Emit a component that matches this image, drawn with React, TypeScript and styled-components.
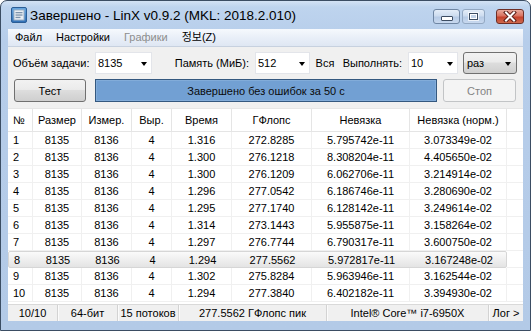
import React from "react";
import styled, { createGlobalStyle, css } from "styled-components";

const GlobalStyle = createGlobalStyle`
	html, body {
		margin: 0;
		padding: 0;
		background: #ffffff;
	}
	body {
		font-family: "Liberation Sans", "Noto Sans CJK KR", sans-serif;
		font-size: 11px;
		color: #000;
	}
`;

const COLS = "25px 49px 50px 40px 60px 80px 98px 97px";

const Window = styled.div`
	width: 531px;
	height: 331px;
	box-sizing: border-box;
	display: flex;
	flex-direction: column;
	border: 1px solid #3b4d63;
	border-radius: 7px 7px 0 0;
	background: linear-gradient(180deg, #d3e2f4 0px, #bed4ee 6px, #b6cdea 40px, #b3cae7 100%);
	padding: 0 7px 9px 7px;
	overflow: hidden;
`;

const TitleBar = styled.div`
	height: 28px;
	display: flex;
	align-items: center;
	padding-left: 3px;

	.title {
		margin-left: 3px;
		font-size: 13.5px;
		color: #000;
		white-space: nowrap;
	}
`;

const CaptionGroup = styled.div`
	margin-left: auto;
	display: flex;
	align-items: center;
	gap: 2px;
	margin-right: -1px;
	margin-top: 3px;
`;

const CaptionButton = styled.div<{ $kind: "min" | "max" | "close" }>`
	height: 15px;
	width: ${(p) => (p.$kind === "close" ? "28px" : p.$kind === "min" ? "27px" : "23px")};
	box-sizing: border-box;
	border: 1px solid ${(p) => (p.$kind === "close" ? "#6e2e26" : "#6f86a3")};
	border-radius: 3px;
	display: flex;
	align-items: center;
	justify-content: center;
	background: ${(p) =>
		p.$kind === "close"
			? "linear-gradient(180deg, #e9a99b 0%, #d9725f 45%, #c5412b 55%, #cf6a4e 100%)"
			: "linear-gradient(180deg, #e4edf8 0%, #cddcef 45%, #b7cbe6 55%, #c8d9ef 100%)"};
	${(p) =>
		p.$kind === "close" &&
		css`
			margin-left: 9px;
		`}
	${(p) =>
		p.$kind === "max" &&
		css`
			border-color: #93a8c2;
		`}
`;

const MinGlyph = styled.div`
	width: 10px;
	height: 3px;
	margin-top: 4px;
	background: #fff;
	border: 1px solid #3d4d63;
	border-radius: 1px;
`;

const MaxGlyph = styled.div`
	width: 7px;
	height: 5px;
	border: 1px solid #3d4d63;
	box-shadow: inset 0 0 0 1px #fff, 0 0 0 1px rgba(255, 255, 255, 0.7);
	background: #c3d3e8;
`;

const Client = styled.div`
	flex: 1;
	display: flex;
	flex-direction: column;
	background: #f0f0f0;
	min-height: 0;
`;

const MenuBar = styled.div`
	height: 17px;
	display: flex;
	align-items: center;
	background: linear-gradient(180deg, #f6f9fd 0%, #e9eff8 50%, #dfe7f3 100%);
	border-bottom: 1px solid #c7d1df;
`;

const MenuItem = styled.span<{ $disabled?: boolean }>`
	padding: 0 7px;
	color: ${(p) => (p.$disabled ? "#8d8d8d" : "#000")};
	font-size: 11px;
	line-height: 17px;
`;

const ToolRow = styled.div<{ $h: number }>`
	display: flex;
	align-items: center;
	height: ${(p) => p.$h}px;
	margin-top: 5px;
`;

const Label = styled.div<{ $w: number; $align?: "left" | "right" | "center" }>`
	width: ${(p) => p.$w}px;
	box-sizing: border-box;
	text-align: ${(p) => p.$align || "right"};
	padding: ${(p) => (p.$align === "left" ? "0 0 0 5px" : p.$align === "center" ? "0" : "0 6px 0 0")};
	white-space: nowrap;
`;

const Combo = styled.div<{ $w: number }>`
	width: ${(p) => p.$w}px;
	height: 22px;
	box-sizing: border-box;
	background: #fff;
	border: 1px solid #e3e5ea;
	display: flex;
	align-items: center;
	padding: 0 4px 0 2px;

	span {
		flex: 1;
	}
`;

const Arrow = styled.div`
	width: 0;
	height: 0;
	border-left: 3.5px solid transparent;
	border-right: 3.5px solid transparent;
	border-top: 4px solid #000;
	margin-top: 1px;
`;

const ComboButton = styled(Combo)`
	margin-left: 5px;
	border: 1px solid #707070;
	border-radius: 3px;
	background: linear-gradient(180deg, #f2f2f2 0%, #ebebeb 45%, #dddddd 50%, #cfcfcf 100%);
	padding: 0 5px 0 3px;
`;

const Button = styled.div<{ $w: number; $disabled?: boolean; $ml: number }>`
	width: ${(p) => p.$w}px;
	height: 23px;
	margin-left: ${(p) => p.$ml}px;
	box-sizing: border-box;
	display: flex;
	align-items: center;
	justify-content: center;
	border-radius: 3px;
	${(p) =>
		p.$disabled
			? css`
					border: 1px solid #c2c4c6;
					background: #f4f4f4;
					color: #838383;
				`
			: css`
					border: 1px solid #707070;
					background: linear-gradient(180deg, #f2f2f2 0%, #ebebeb 45%, #dddddd 50%, #cfcfcf 100%);
					color: #000;
				`}
`;

const Progress = styled.div<{ $ml: number }>`
	width: 342px;
	height: 23px;
	margin-left: ${(p) => p.$ml}px;
	box-sizing: border-box;
	border: 1px solid #34587f;
	background: #72a0d3;
	box-shadow: inset 0 0 0 1px #82acd9;
	display: flex;
	align-items: center;
	justify-content: center;
	color: #0b0b0b;
`;

const Table = styled.div`
	flex: 1;
	margin-top: 6px;
	background: #fff;
	display: flex;
	flex-direction: column;
	overflow: hidden;
`;

const Row = styled.div<{ $header?: boolean }>`
	display: flex;
	height: ${(p) => (p.$header ? "24px" : "17px")};
	flex-shrink: 0;
	box-sizing: border-box;
	${(p) =>
		p.$header &&
		css`
			border-top: 1px solid #e6e6e6;
			border-bottom: 1px solid #e5e5e5;
		`}
`;

const Cells = styled.div<{ $selected?: boolean }>`
	display: grid;
	grid-template-columns: ${COLS};
	box-sizing: border-box;
	width: 499px;
	${(p) =>
		p.$selected &&
		css`
			border: 1px solid #d6d6d6;
			border-radius: 2px;
			background: linear-gradient(180deg, #fafafa 0%, #efefef 50%, #e4e4e4 100%);
		`}
`;

const Cell = styled.div<{ $left?: boolean; $header?: boolean; $plain?: boolean }>`
	display: flex;
	align-items: center;
	justify-content: ${(p) => (p.$left ? "flex-start" : "center")};
	padding-left: ${(p) => (p.$left ? "5px" : "0")};
	white-space: nowrap;
	overflow: hidden;
	box-sizing: border-box;
	border-right: 1px solid ${(p) => (p.$header ? "#e5e5e5" : "#f0f0f0")};
	${(p) =>
		!p.$header &&
		!p.$plain &&
		css`
			border-bottom: 1px solid #f0f0f0;
		`}
	${(p) =>
		p.$plain &&
		css`
			border-right-color: transparent;
		`}
`;

const Filler = styled(Cell)`
	width: 16px;
	border-right: none;
`;

const StatusBar = styled.div`
	height: 17px;
	display: flex;
	border-top: 1px solid #d9d9d9;
	box-sizing: border-box;
	background: #f0f0f0;
`;

const Panel = styled.div<{ $w: number; $first?: boolean }>`
	width: ${(p) => p.$w}px;
	box-sizing: border-box;
	display: flex;
	align-items: center;
	justify-content: center;
	white-space: nowrap;
	overflow: hidden;
	${(p) =>
		!p.$first &&
		css`
			border-left: 1px solid #d3d3d3;
			box-shadow: inset 1px 0 0 #fbfbfb;
		`}
`;

const headers = ["№", "Размер", "Измер.", "Выр.", "Время", "ГФлопс", "Невязка", "Невязка (норм.)"];

const rows: string[][] = [
	["1", "8135", "8136", "4", "1.316", "272.8285", "5.795742e-11", "3.073349e-02"],
	["2", "8135", "8136", "4", "1.300", "276.1218", "8.308204e-11", "4.405650e-02"],
	["3", "8135", "8136", "4", "1.300", "276.1209", "6.062706e-11", "3.214914e-02"],
	["4", "8135", "8136", "4", "1.296", "277.0542", "6.186746e-11", "3.280690e-02"],
	["5", "8135", "8136", "4", "1.295", "277.1740", "6.128142e-11", "3.249614e-02"],
	["6", "8135", "8136", "4", "1.314", "273.1443", "5.955875e-11", "3.158264e-02"],
	["7", "8135", "8136", "4", "1.297", "276.7744", "6.790317e-11", "3.600750e-02"],
	["8", "8135", "8136", "4", "1.294", "277.5562", "5.972817e-11", "3.167248e-02"],
	["9", "8135", "8136", "4", "1.302", "275.8284", "5.963946e-11", "3.162544e-02"],
	["10", "8135", "8136", "4", "1.294", "277.3840", "6.402182e-11", "3.394930e-02"],
];

const SELECTED = 7;

function AppIcon() {
	return (
		<svg width="16" height="16" viewBox="0 0 16 16">
			<defs>
				<linearGradient id="ic" x1="0" y1="0" x2="0" y2="1">
					<stop offset="0" stopColor="#6aa8e0" />
					<stop offset="1" stopColor="#2f6fb6" />
				</linearGradient>
			</defs>
			<rect x="0.5" y="0.5" width="15" height="15" rx="1.5" fill="url(#ic)" stroke="#2b5d95" />
			<rect x="3" y="3" width="10" height="10" fill="#e9eef3" stroke="#9fb3c8" />
			<rect x="4.5" y="5" width="7" height="1.3" fill="#7d93ab" />
			<rect x="4.5" y="7.4" width="7" height="1.3" fill="#7d93ab" />
			<rect x="4.5" y="9.8" width="5" height="1.3" fill="#7d93ab" />
		</svg>
	);
}

function CloseGlyph() {
	return (
		<svg width="14" height="11" viewBox="0 0 14 11">
			<path d="M3 1.5 L11 9.5 M11 1.5 L3 9.5" stroke="#5a1f18" strokeWidth="4" strokeLinecap="square" />
			<path d="M3 1.5 L11 9.5 M11 1.5 L3 9.5" stroke="#ffffff" strokeWidth="2" strokeLinecap="square" />
		</svg>
	);
}

export default function App() {
	return (
		<>
			<GlobalStyle />
			<Window>
				<TitleBar>
					<AppIcon />
					<span className="title">Завершено - LinX v0.9.2 (MKL: 2018.2.010)</span>
					<CaptionGroup>
						<CaptionButton $kind="min">
							<MinGlyph />
						</CaptionButton>
						<CaptionButton $kind="max">
							<MaxGlyph />
						</CaptionButton>
						<CaptionButton $kind="close">
							<CloseGlyph />
						</CaptionButton>
					</CaptionGroup>
				</TitleBar>

				<Client>
					<MenuBar>
						<MenuItem>Файл</MenuItem>
						<MenuItem>Настройки</MenuItem>
						<MenuItem $disabled>Графики</MenuItem>
						<MenuItem>정보(Z)</MenuItem>
					</MenuBar>

					<ToolRow $h={22}>
						<Label $w={87} $align="left">
							Объём задачи:
						</Label>
						<Combo $w={57}>
							<span>8135</span>
							<Arrow />
						</Combo>
						<Label $w={103}>Память (МиБ):</Label>
						<Combo $w={55}>
							<span>512</span>
							<Arrow />
						</Combo>
						<Label $w={30} $align="center">
							Вся
						</Label>
						<Label $w={68}>Выполнять:</Label>
						<Combo $w={50}>
							<span>10</span>
							<Arrow />
						</Combo>
						<ComboButton $w={54}>
							<span>раз</span>
							<Arrow />
						</ComboButton>
					</ToolRow>

					<ToolRow $h={23}>
						<Button $w={72} $ml={6}>
							Тест
						</Button>
						<Progress $ml={9}>Завершено без ошибок за 50 с</Progress>
						<Button $w={73} $ml={6} $disabled>
							Стоп
						</Button>
					</ToolRow>

					<Table>
						<Row $header>
							<Cells>
								{headers.map((h, i) => (
									<Cell key={h} $header $left={i === 0}>
										{h}
									</Cell>
								))}
							</Cells>
							<Filler $header />
						</Row>
						{rows.map((r, ri) => (
							<Row key={ri}>
								<Cells $selected={ri === SELECTED}>
									{r.map((v, ci) => (
										<Cell key={ci} $left={ci === 0} $plain={ri === SELECTED}>
											{v}
										</Cell>
									))}
								</Cells>
								<Filler />
							</Row>
						))}
					</Table>

					<StatusBar>
						<Panel $w={49} $first>
							10/10
						</Panel>
						<Panel $w={60}>64-бит</Panel>
						<Panel $w={61}>15 потоков</Panel>
						<Panel $w={148}>277.5562 ГФлопс пик</Panel>
						<Panel $w={162}>Intel® Core™ i7-6950X</Panel>
						<Panel $w={35}>Лог &gt;</Panel>
					</StatusBar>
				</Client>
			</Window>
		</>
	);
}
